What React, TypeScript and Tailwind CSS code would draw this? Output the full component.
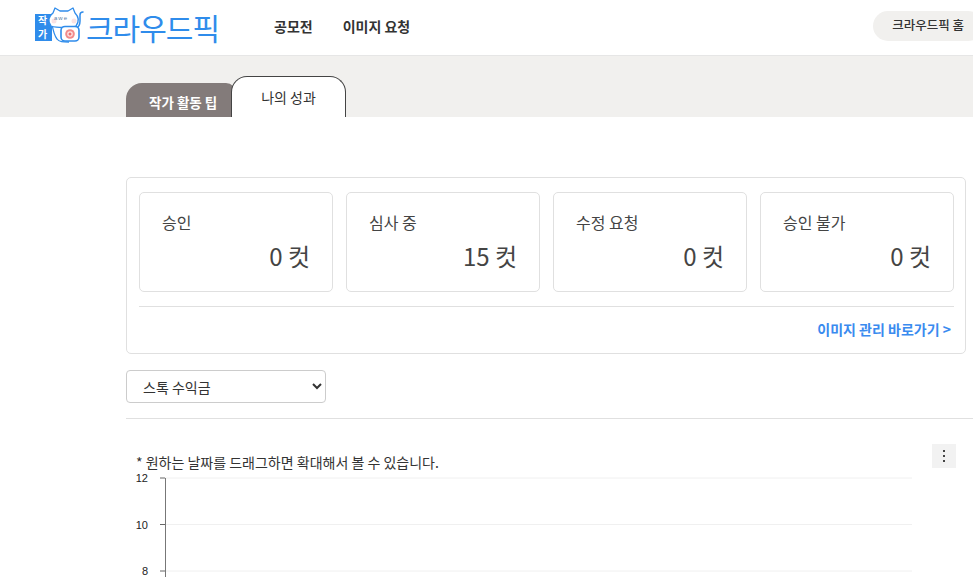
const KR = "font-['Noto_Sans_CJK_KR','Noto_Sans',sans-serif]";

const STATS = [
  { label: '승인', count: '0 컷' },
  { label: '심사 중', count: '15 컷' },
  { label: '수정 요청', count: '0 컷' },
  { label: '승인 불가', count: '0 컷' },
];

const Logo = () => (
  <svg width="52" height="38" viewBox="0 0 52 38" className="shrink-0 overflow-visible">
    <rect x="2" y="6" width="17" height="27" fill="#2f8ceb" />
    <text x="5" y="16" fontSize="10" fontWeight="700" fill="#fff" fontFamily="Noto Sans CJK KR">작</text>
    <text x="5" y="30" fontSize="10" fontWeight="700" fill="#fff" fontFamily="Noto Sans CJK KR">가</text>
    {/* tail */}
    <path d="M43 20c3-1 4-3 4-7V7c0-2 1-3 3-3" fill="none" stroke="#2f8ceb" strokeWidth="1.5" strokeLinecap="round" />
    {/* body */}
    <path d="M19 16c1 6 2 11 5 15 2 3 6 3 12 3" fill="#fff" stroke="#2f8ceb" strokeWidth="1.3" />
    {/* head */}
    <path d="M18 18c-3-4-3-9 2-13l2-5 5 3h8l5-3 2 5c4 4 4 9 1 13-6 2-19 2-25 0z" fill="#fff" stroke="#2f8ceb" strokeWidth="1.3" strokeLinejoin="round" />
    <circle cx="21" cy="13" r="2.5" fill="#fbe3e3" />
    <circle cx="41" cy="13" r="2.5" fill="#fbe3e3" />
    <text x="21" y="12" fontSize="6" fill="#5d7fa8" fontFamily="Liberation Sans" letterSpacing="1">awe</text>
    {/* camera */}
    <rect x="28" y="18.5" width="18" height="14.5" rx="4" fill="#fff" stroke="#2f8ceb" strokeWidth="1.6" />
    <circle cx="37" cy="26" r="4.8" fill="#f28b8b" />
    <circle cx="37" cy="26" r="2.8" fill="#fde5e5" />
    <circle cx="37" cy="26" r="1.5" fill="#ee6f6f" />
  </svg>
);

const Chart = () => (
  <svg width="847" height="110" className="block">
    {[
      { y: 7, label: '12' },
      { y: 53.5, label: '10' },
      { y: 100, label: '8' },
    ].map((t) => (
      <g key={t.label}>
        <line x1="39" x2="786" y1={t.y} y2={t.y} stroke="#f0f0f0" />
        <line x1="34" x2="39" y1={t.y} y2={t.y} stroke="#666" />
        <text x="22" y={t.y + 4} textAnchor="end" fontSize="11" fill="#222" fontFamily="Liberation Sans">{t.label}</text>
      </g>
    ))}
    <line x1="39.5" x2="39.5" y1="7" y2="110" stroke="#777" />
  </svg>
);

export default function App() {
  return (
    <div className={`w-full h-[577px] overflow-hidden bg-white text-[#333] ${KR}`}>
      {/* Header */}
      <header className="h-[56px] flex items-center border-b border-[#e6e6e6] pl-[33px] pb-[2px]">
        <div className="flex items-center">
          <Logo />
          <span className="text-[30px] font-normal leading-none text-[#2f8ceb] ml-[1px] tracking-[-1px]">크라우드픽</span>
        </div>
        <nav className="flex items-center gap-[30px] ml-[55px] text-[14px] font-bold text-[#333]">
          <span>공모전</span>
          <span>이미지 요청</span>
        </nav>
        <div className="ml-auto -mr-[10px] h-[30px] -mt-[2px] pl-[19px] pr-[19px] rounded-full bg-[#f1f0ee] flex items-center text-[12.5px] font-medium whitespace-nowrap">
          크라우드픽 홈
        </div>
      </header>

      {/* Tabs */}
      <div className="h-[61px] bg-[#f1f0ee] pl-[126px] flex items-end">
        <div className="w-[110px] h-[34px] bg-[#837b7a] rounded-tl-[16px] rounded-tr-[10px] text-white text-[13.5px] font-bold flex items-center pl-[23px] pt-[5px]">
          작가 활동 팁
        </div>
        <div className="relative w-[115px] h-[41px] -ml-[5px] bg-white border border-b-0 border-[#444] rounded-t-[16px] text-[14px] flex items-start justify-center pt-[10px]">
          나의 성과
        </div>
      </div>

      {/* Stats */}
      <main className="pl-[126px]">
        <section className="mt-[60px] w-[840px] h-[177px] border border-[#e0e0e0] rounded-[5px] pl-[12px] pr-[11px] pt-[14px]">
          <div className="flex gap-[13px]">
            {STATS.map((s) => (
              <div key={s.label} className="w-[194px] shrink-0 h-[100px] border border-[#e0e0e0] rounded-[5px] pl-[22px] pr-[22px] pt-[18px]">
                <div className="text-[16px] leading-[22px] text-[#444]">{s.label}</div>
                <div className="text-right text-[24px] leading-[32px] mt-[7px] text-[#444]">{s.count}</div>
              </div>
            ))}
          </div>
          <div className="border-t border-[#e0e0e0] mt-[14px] pt-[12px] text-right pr-[3px] text-[#3a8bef] text-[14px] font-bold leading-[20px]">
            이미지 관리 바로가기 &gt;
          </div>
        </section>

        <select className="block mt-[16px] w-[200px] h-[33px] border border-[#ccc] rounded-[4px] bg-white pl-[12px] text-[14px] text-[#333]">
          <option>스톡 수익금</option>
        </select>

        <div className="border-t border-[#e0e0e0] mt-[15px]" />

        <div className="relative pt-[34px]">
          <button className="absolute left-[806px] top-[25px] w-[24px] h-[24px] bg-[#f2f2f2] flex flex-col items-center justify-center gap-[3px]">
            <span className="w-[2px] h-[2px] bg-[#444]" />
            <span className="w-[2px] h-[2px] bg-[#444]" />
            <span className="w-[2px] h-[2px] bg-[#444]" />
          </button>
          <p className="pl-[10px] text-[14px] leading-[18px] text-[#333]">* 원하는 날짜를 드래그하면 확대해서 볼 수 있습니다.</p>
          <Chart />
        </div>
      </main>
    </div>
  );
}
